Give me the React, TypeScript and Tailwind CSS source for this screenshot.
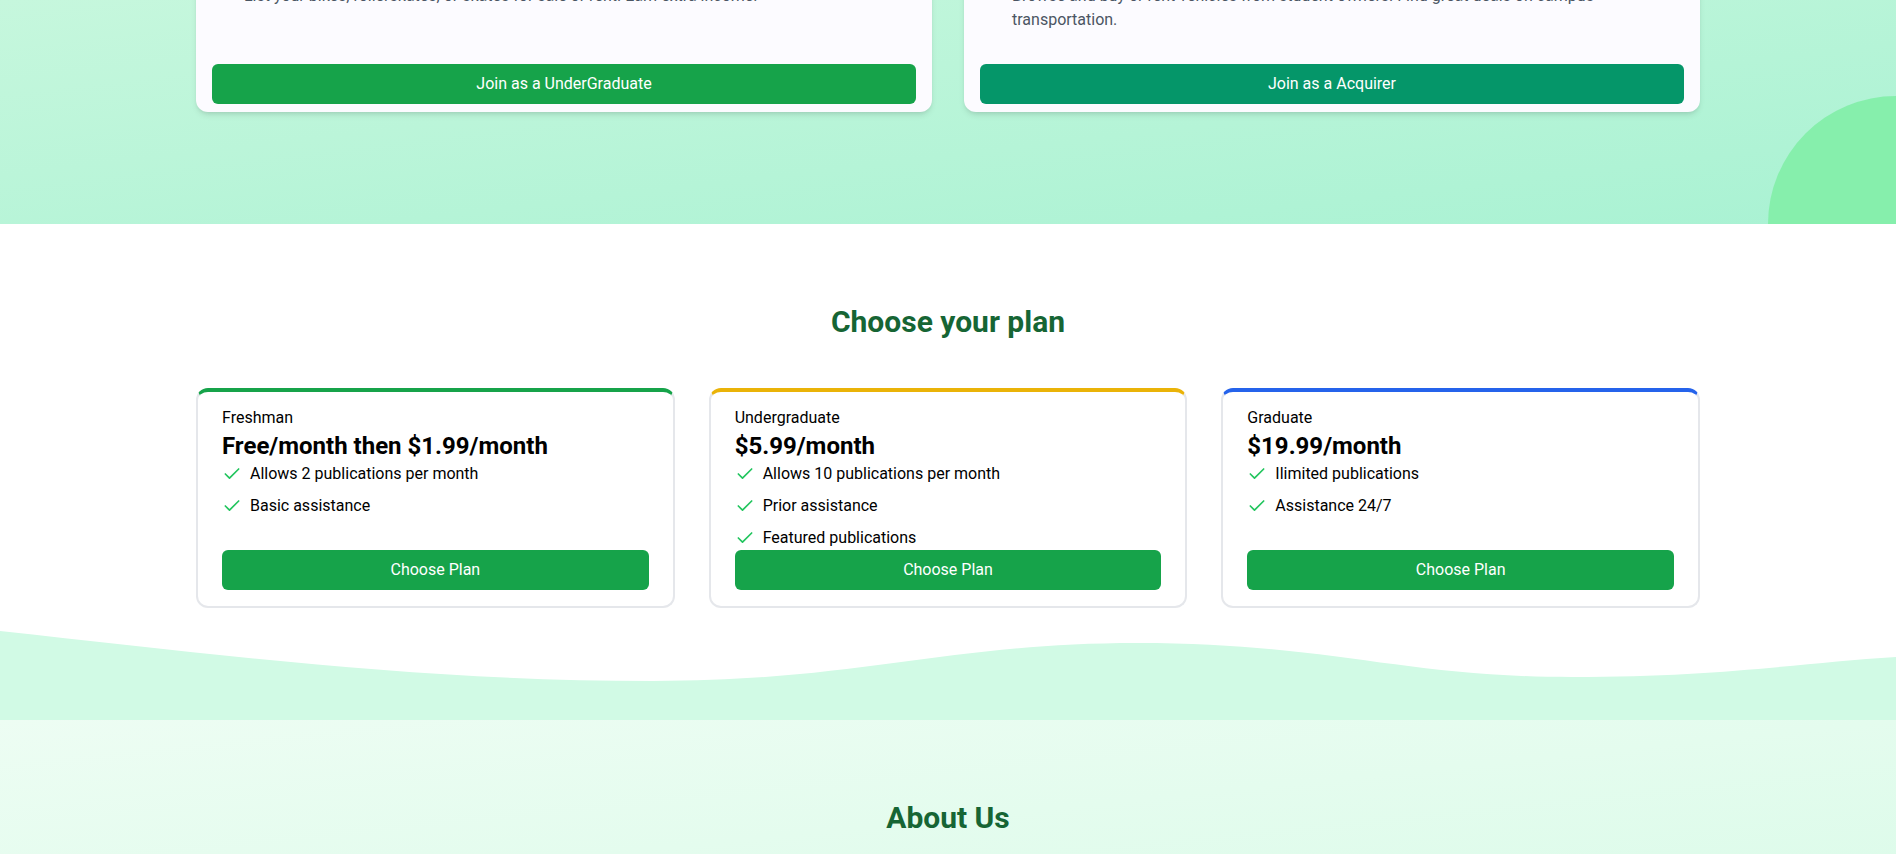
import React from 'react';
import { Check } from 'lucide-react';

type Plan = {
    name: string;
    price: string;
    features: string[];
    accent: string;
};

const plans: Plan[] = [
    {
        name: 'Freshman',
        price: 'Free/month then $1.99/month',
        features: ['Allows 2 publications per month', 'Basic assistance'],
        accent: 'border-t-[#16a34a]',
    },
    {
        name: 'Undergraduate',
        price: '$5.99/month',
        features: ['Allows 10 publications per month', 'Prior assistance', 'Featured publications'],
        accent: 'border-t-[#eab308]',
    },
    {
        name: 'Graduate',
        price: '$19.99/month',
        features: ['Ilimited publications', 'Assistance 24/7'],
        accent: 'border-t-[#2563eb]',
    },
];

const RoleCard: React.FC<{ text: string; button: string; buttonClass: string }> = ({ text, button, buttonClass }) => (
    <div className="flex flex-col bg-[#fcfbff] rounded-xl shadow-md px-4 pt-4 pb-2">
        <ul className="mb-8 text-[#4b5563] text-base leading-6">
            <li className="pl-8">{text}</li>
        </ul>
        <button className={`mt-auto h-10 w-full rounded-md text-white font-normal ${buttonClass}`}>
            {button}
        </button>
    </div>
);

const PlanCard: React.FC<{ plan: Plan }> = ({ plan }) => (
    <div className={`flex flex-col bg-white rounded-xl border-2 border-[#e5e7eb] border-t-4 ${plan.accent} px-6 pt-[14px] pb-4`}>
        <p className="text-base leading-6 text-black">{plan.name}</p>
        <p className="text-2xl leading-8 font-bold text-black">{plan.price}</p>
        <ul className="space-y-2">
            {plan.features.map((f) => (
                <li key={f} className="flex items-center gap-2 text-base leading-6 text-black">
                    <Check className="w-5 h-5 text-[#22c55e]" strokeWidth={2} />
                    {f}
                </li>
            ))}
        </ul>
        <button className="mt-auto h-10 w-full rounded-md bg-[#16a34a] text-white font-normal">Choose Plan</button>
    </div>
);

export default function App() {
    return (
        <div className="font-['Roboto',sans-serif] min-h-screen bg-white">
            {/* hero bottom */}
            <section className="relative overflow-hidden bg-gradient-to-br from-[#c6f7dd] to-[#a9f2d3] h-[224px]">
                <div className="absolute -right-32 -bottom-32 w-64 h-64 rounded-full bg-[#86efac]" />
                <div className="relative w-[1504px] mx-auto -mt-8 grid grid-cols-2 gap-8">
                    <RoleCard
                        text="List your bikes, rollerskates, or skates for sale or rent. Earn extra income."
                        button="Join as a UnderGraduate"
                        buttonClass="bg-[#16a34a]"
                    />
                    <RoleCard
                        text="Browse and buy or rent vehicles from student owners. Find great deals on campus transportation."
                        button="Join as a Acquirer"
                        buttonClass="bg-[#059669]"
                    />
                </div>
            </section>

            {/* plans */}
            <section className="bg-white pt-20">
                <h2 className="text-3xl leading-9 font-bold text-[#166534] text-center mb-12">Choose your plan</h2>
                <div className="w-[1504px] mx-auto grid grid-cols-3 gap-[34px]">
                    {plans.map((p) => (
                        <PlanCard key={p.name} plan={p} />
                    ))}
                </div>
                <svg className="block w-full h-[112px]" viewBox="0 0 1896 112" preserveAspectRatio="none">
                    <path
                        d="M0,23 C220,47 420,73 653,73 C860,73 950,35 1137,35 C1330,35 1400,69 1572,69 C1720,69 1800,55 1896,49 L1896,112 L0,112 Z"
                        fill="#d1fae5"
                    />
                </svg>
            </section>

            {/* about */}
            <section className="bg-gradient-to-br from-[#edfdf3] to-[#dbfbe9] pt-20 pb-20">
                <h2 className="text-3xl leading-9 font-bold text-[#166534] text-center">About Us</h2>
            </section>
        </div>
    );
}
